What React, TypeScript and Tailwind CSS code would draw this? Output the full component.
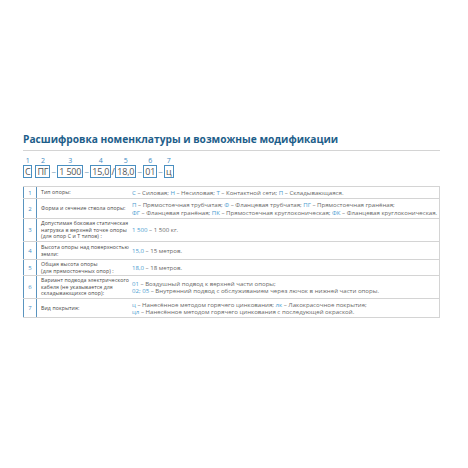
import React from "react";

type Part = { t: string; c?: boolean };

const rows: { n: string; desc: string[]; val: Part[][]; h: string }[] = [
  {
    n: "1",
    desc: ["Тип опоры:"],
    val: [
      [
        { t: "С", c: true },
        { t: " – Силовая; " },
        { t: "Н", c: true },
        { t: " – Несиловая; " },
        { t: "Т", c: true },
        { t: " – Контактной сети; " },
        { t: "П", c: true },
        { t: " – Складывающаяся." },
      ],
    ],
    h: "h-[12px]",
  },
  {
    n: "2",
    desc: ["Форма и сечение ствола опоры:"],
    val: [
      [
        { t: "П", c: true },
        { t: " – Прямостоечная трубчатая; " },
        { t: "Ф", c: true },
        { t: " – Фланцевая трубчатая; " },
        { t: "ПГ", c: true },
        { t: " – Прямостоечная гранёная;" },
      ],
      [
        { t: "ФГ", c: true },
        { t: " – Фланцевая гранёная; " },
        { t: "ПК", c: true },
        { t: " – Прямостоечная круглоконическая; " },
        { t: "ФК", c: true },
        { t: " – Фланцевая круглоконическая." },
      ],
    ],
    h: "h-[20px]",
  },
  {
    n: "3",
    desc: [
      "Допустимая боковая статическая",
      "нагрузка в верхней точке опоры",
      "(для опор С и Т типов) :",
    ],
    val: [[{ t: "1 500", c: true }, { t: " – 1 500 кг." }]],
    h: "h-[23px]",
  },
  {
    n: "4",
    desc: ["Высота опоры над поверхностью", "земли:"],
    val: [[{ t: "15,0", c: true }, { t: " – 15 метров." }]],
    h: "h-[18px]",
  },
  {
    n: "5",
    desc: ["Общая высота опоры", "(для прямостоечных опор) :"],
    val: [[{ t: "18,0", c: true }, { t: " – 18 метров." }]],
    h: "h-[16px]",
  },
  {
    n: "6",
    desc: [
      "Вариант подвода электрического",
      "кабеля (не указывается для",
      "складывающихся опор):",
    ],
    val: [
      [{ t: "01", c: true }, { t: " – Воздушный подвод к верхней части опоры;" }],
      [
        { t: "02; 05", c: true },
        { t: " – Внутренний подвод с обслуживанием через лючок в нижней части опоры." },
      ],
    ],
    h: "h-[23px]",
  },
  {
    n: "7",
    desc: ["Вид покрытия:"],
    val: [
      [
        { t: "ц", c: true },
        { t: " – Нанесённое методом горячего цинкования; " },
        { t: "лк", c: true },
        { t: " – Лакокрасочное покрытие;" },
      ],
      [
        { t: "цл", c: true },
        { t: " – Нанесённое методом горячего цинкования с последующей окраской." },
      ],
    ],
    h: "h-[19px]",
  },
];

const code = [
  { l: "1", t: "С" },
  { s: "" },
  { l: "2", t: "ПГ" },
  { s: "–" },
  { l: "3", t: "1 500" },
  { s: "–" },
  { l: "4", t: "15,0" },
  { s: "/" },
  { l: "5", t: "18,0" },
  { s: "–" },
  { l: "6", t: "01" },
  { s: "–" },
  { l: "7", t: "ц" },
];

export default function App() {
  return (
    <div
      className="w-[468px] h-[468px] bg-white pt-[131px] pl-[23px] pr-[28px]"
      style={{ fontFamily: '"Open Sans", "Noto Sans", sans-serif' }}
    >
      <div className="border-b border-[#d4d4d4] pb-[3px]">
        <h1 className="text-[10.2px] leading-[16px] font-bold text-[#1d5e8a]">
          Расшифровка номенклатуры и возможные модификации
        </h1>
      </div>

      <div className="flex items-end mt-[5px] text-[#666]">
        {code.map((c, i) =>
          "s" in c ? (
            <div
              key={i}
              className={`h-[13px] flex items-center justify-center text-[9px] leading-none text-[#8aa9bf] ${
                c.s === "" ? "w-[3px]" : c.s === "/" ? "w-[4px] text-[#555]" : "w-[7px]"
              }`}
            >
              {c.s}
            </div>
          ) : (
            <div key={i} className="flex flex-col items-center">
              <span className="text-[7px] leading-[9px] text-[#3f8cc4]">{c.l}</span>
              <span className="h-[13px] border border-[#4a8fc0] px-[1px] flex items-center text-[9px] leading-none text-[#555] tracking-[-0.2px]">
                {c.t}
              </span>
            </div>
          )
        )}
      </div>

      <div className="mt-[8px] border-t border-r border-[#d4d4d4]">
        {rows.map((r) => (
          <div key={r.n} className={`flex border-b border-[#d4d4d4] ${r.h}`}>
            <div className="w-[14px] shrink-0 border-l border-r border-[#5a94bf] flex items-center justify-center text-[6px] leading-none text-[#3f8cc4]">
              {r.n}
            </div>
            <div className="w-[91px] shrink-0 pl-[4px] flex flex-col justify-center text-[5.2px] leading-[6.8px] tracking-[0.1px] text-[#444] whitespace-nowrap">
              {r.desc.map((d) => (
                <span key={d}>{d}</span>
              ))}
            </div>
            <div className="flex-1 pl-[4px] flex flex-col justify-center text-[6.1px] leading-[7.5px] text-[#666] whitespace-nowrap">
              {r.val.map((line, i) => (
                <span key={i}>
                  {line.map((p, j) => (
                    <span key={j} className={p.c ? "text-[#4a9bd0]" : ""}>
                      {p.t}
                    </span>
                  ))}
                </span>
              ))}
            </div>
          </div>
        ))}
      </div>
    </div>
  );
}
